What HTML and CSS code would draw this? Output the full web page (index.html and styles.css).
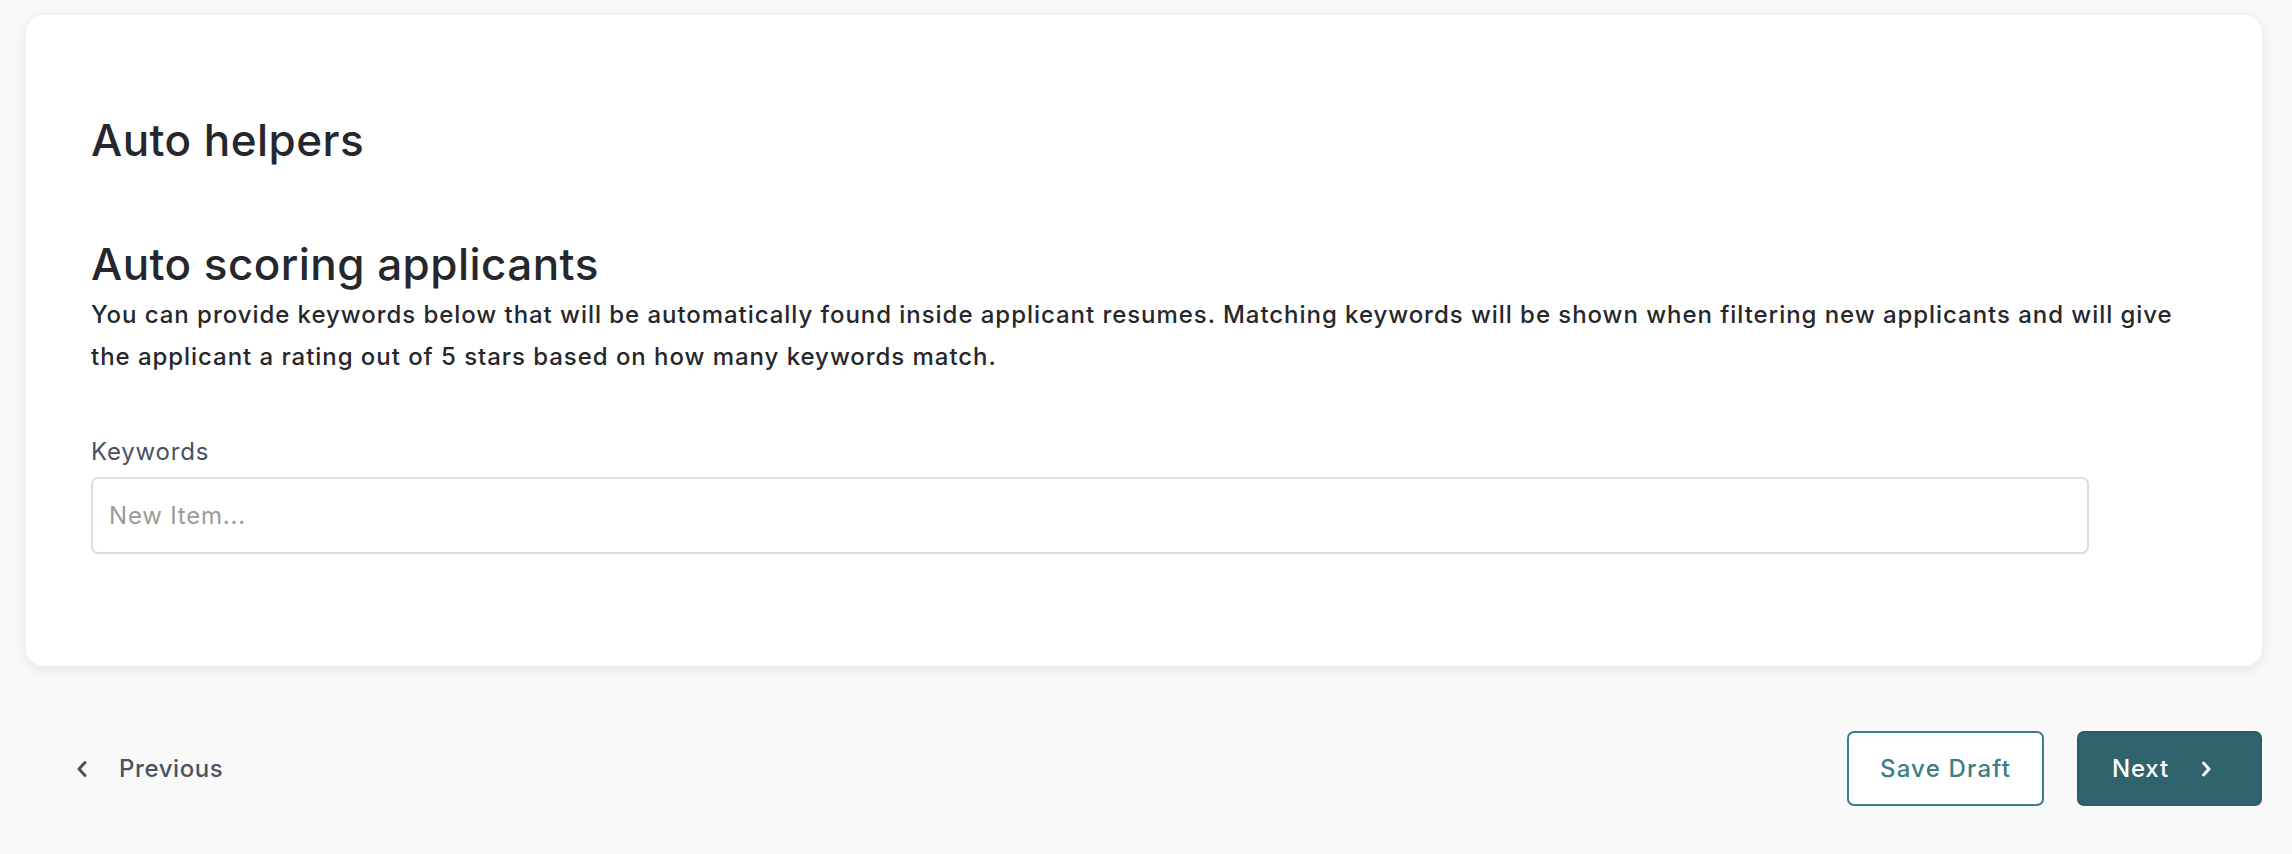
FILE: index.html
```html
<!DOCTYPE html>
<html lang="en">
<head>
<meta charset="utf-8">
<title>Auto helpers</title>
<link rel="stylesheet" href="styles.css">
</head>
<body>
<main class="page">
  <section class="card">
    <h1 class="section-title">Auto helpers</h1>
    <h2 class="group-title">Auto scoring applicants</h2>
    <p class="group-desc">You can provide keywords below that will be automatically found inside applicant resumes. Matching keywords will be shown when filtering new applicants and will give the applicant a rating out of 5 stars based on how many keywords match.</p>
    <label class="field-label" for="keywords">Keywords</label>
    <input class="field-input" id="keywords" type="text" placeholder="New Item...">
  </section>

  <nav class="wizard-nav">
    <button class="btn-back" type="button">
      <svg class="chev" width="12" height="18" viewBox="0 0 12 18" aria-hidden="true"><path d="M9 2.5 L3 9 L9 15.5" fill="none" stroke="currentColor" stroke-width="3" stroke-linecap="round" stroke-linejoin="round"/></svg>
      <span>Previous</span>
    </button>
    <div class="nav-actions">
      <button class="btn-outline" type="button">Save Draft</button>
      <button class="btn-primary" type="button">
        <span>Next</span>
        <svg class="chev" width="12" height="18" viewBox="0 0 12 18" aria-hidden="true"><path d="M3.5 3 L9 9 L3.5 15" fill="none" stroke="currentColor" stroke-width="3" stroke-linecap="round" stroke-linejoin="round"/></svg>
      </button>
    </div>
  </nav>
</main>
</body>
</html>
```
FILE: styles.css
```css
* { box-sizing: border-box; }

html, body {
  margin: 0;
  background: #f9f9f9;
}

body {
  font-family: Inter, "Noto Sans", "Liberation Sans", sans-serif;
  color: #26272c;
}

.page {
  padding: 15px 30px 0 26px;
}

.card {
  background: #ffffff;
  border-radius: 18px;
  box-shadow: 0 3px 14px rgba(0, 0, 0, 0.09);
  padding: 99px 65px 112px 65px;
  display: flex;
  flex-direction: column;
  align-items: flex-start;
}

.section-title,
.group-title {
  margin: 0;
  font-size: 44px;
  line-height: 52px;
  font-weight: 500;
  letter-spacing: 0.45px;
  color: #26272c;
}

.group-title {
  margin-top: 72px;
}

.group-desc {
  margin: 4px 0 0;
  max-width: 2095px;
  font-size: 24px;
  line-height: 42px;
  font-weight: 500;
  letter-spacing: 0.95px;
  color: #26272c;
}

.field-label {
  margin-top: 58px;
  font-size: 24px;
  line-height: 32px;
  letter-spacing: 0.8px;
  color: #4a5061;
}

.field-input {
  margin-top: 9px;
  width: 1998px;
  height: 77px;
  border: 2px solid #dedede;
  border-radius: 7px;
  padding: 0 16px;
  font-family: inherit;
  font-size: 24px;
  letter-spacing: 0.8px;
  color: #26272c;
  background: #fff;
  outline: none;
}

.field-input::placeholder {
  color: #9b9b9b;
}

.wizard-nav {
  margin-top: 65px;
  display: flex;
  align-items: center;
  justify-content: space-between;
}

button {
  font-family: inherit;
  cursor: pointer;
}

.btn-back {
  display: flex;
  align-items: center;
  gap: 31px;
  margin-left: 50px;
  padding: 0;
  border: 0;
  background: none;
  font-size: 24px;
  font-weight: 500;
  letter-spacing: 0.6px;
  color: #4b5264;
}

.chev { display: block; }

.nav-actions {
  display: flex;
  gap: 33px;
}

.btn-outline,
.btn-primary {
  height: 75px;
  border-radius: 7px;
  font-size: 24px;
  font-weight: 500;
  letter-spacing: 1.2px;
  display: flex;
  align-items: center;
}

.btn-outline {
  width: 197px;
  justify-content: center;
  border: 2px solid #3b7d88;
  background: #fff;
  color: #3b7d88;
}

.btn-primary {
  width: 185px;
  padding: 0 0 0 35px;
  gap: 31px;
  border: 0;
  background: #2f636d;
  color: #ffffff;
  letter-spacing: 0.8px;
  box-shadow: inset 0 0 0 2px rgba(0, 0, 0, 0.06);
}
```
